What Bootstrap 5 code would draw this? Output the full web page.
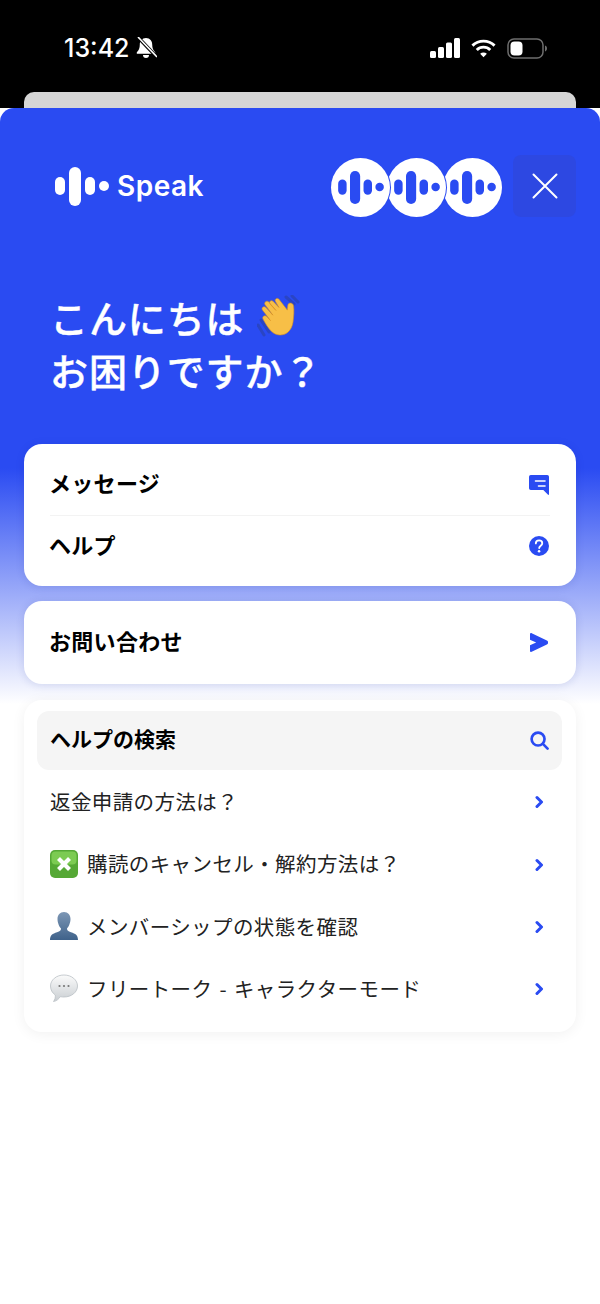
<!DOCTYPE html>
<html lang="ja">

<head>
    <meta charset="UTF-8">
    <meta name="viewport" content="width=device-width, initial-scale=1.0">
    <link href="https://cdn.jsdelivr.net/npm/bootstrap@5.3.0/dist/css/bootstrap.min.css" rel="stylesheet">
    <script src="https://cdn.jsdelivr.net/npm/bootstrap@5.3.0/dist/js/bootstrap.bundle.min.js"></script>
    <style>
        html, body { margin: 0; background: #fff; }
        body { width: 600px; height: 1304px; overflow: hidden; font-family: "Liberation Sans", "Noto Sans CJK JP", sans-serif; }
        .status-area { background: #000; height: 108px; color: #fff; }
        .status-bar { height: 92px; padding: 4px 53px 0 64px; }
        .status-time { font-family: Inter, sans-serif; font-size: 25px; font-weight: 500; line-height: 1; margin-right: 6px; }
        .status-right { gap: 11px; }
        .back-tab { height: 16px; margin: 0 24px; background: #d6d6d6; border-radius: 10px 10px 0 0; }
        .sheet { padding-top: 47px; border-radius: 14px 14px 0 0; height: 1196px;
            background: linear-gradient(#2a4bf2 0, #2a4bf2 360px, #fff 596px); }
        .sheet-head { padding: 0 24px 0 55px; height: 62px; }
        .brand-name { font-family: Inter, sans-serif; font-weight: 600; font-size: 28px; letter-spacing: .5px; line-height: 1; color: #fff; margin-left: 8px; }
        .face { width: 59px; height: 59px; border-radius: 50%; background: #fff; box-shadow: 0 0 0 1px #2a4bf2; margin-left: -3px; position: relative; }
        .face:nth-child(1) { z-index: 3; }
        .face:nth-child(2) { z-index: 2; }
        .face-row { margin: 3px 11px 0 0; }
        .close-box { width: 63px; height: 62px; border-radius: 8px; background: #2d48e2; border: 0; padding: 0; }
        .hello { margin: 73px 0 48px; padding-left: 50px; color: #fff; font-family: "Noto Sans CJK JP", sans-serif; font-size: 38px; font-weight: 500; -webkit-text-stroke: .4px #fff; letter-spacing: .9px; line-height: 53px; }
        .hello svg { vertical-align: -8px; margin-left: 3px; }
        .panel { margin: 0 24px; background: #fff; border: 0; border-radius: 18px; box-shadow: 0 1px 8px rgba(20, 40, 140, .14); }
        .panel-a { padding: 10px 26px; }
        .panel-b { margin-top: 15px; height: 83px; padding: 0 26px; }
        .panel-c { margin-top: 16px; padding: 11px 14px 12px 13px; box-shadow: 0 2px 14px rgba(0, 0, 0, .06); }
        .link-row { height: 61px; font-family: "Noto Sans CJK JP", sans-serif; font-size: 22px; font-weight: 700; color: #000; letter-spacing: .3px; }
        .link-row + .link-row { border-top: 1px solid #f3f3f3; }
        .link-text { margin: -4px 0 0 -1px; }
        .search-row { height: 59px; padding: 0 12px 0 13px; border-radius: 12px; background: #f5f5f5; font-family: "Noto Sans CJK JP", sans-serif; font-size: 21px; font-weight: 700; color: #000; }
        .search-row > span:first-child { margin-top: -4px; }
        .faq-row { height: 62.4px; padding: 0 12px 0 13px; font-family: "Noto Sans CJK JP", sans-serif; font-size: 20.5px; letter-spacing: .4px; word-spacing: 2px; color: #222; }
        .faq-row .icon-slot { padding-top: 2px; }
        .faq-emoji { width: 28px; height: 28px; margin-right: 9px; flex: none; }
        .icon-slot { width: 22px; flex: none; display: flex; justify-content: center; }
    </style>
    <title>Speak</title>
</head>

<body>
    <div class="status-area">
        <div class="status-bar d-flex align-items-center">
            <span class="status-time">13:42</span>
            <svg width="22" height="22" viewBox="0 0 22 22" fill="#fff">
                <path d="M11 1C7 1 4.800 4 4.800 7.600c0 3.700-1 5.800-3 7.600v1.600h18.400v-1.600c-2-1.800-3-3.900-3-7.600C17.200 4 15 1 11 1zM8 18a3 3 0 0 0 6 0z"/>
                <path d="M3.300 .5 21.300 19.500" stroke="#000" stroke-width="3.400"/>
                <path d="M3 0 22 20" stroke="#fff" stroke-width="1.600"/>
            </svg>
            <div class="ms-auto d-flex align-items-center status-right">
                <svg width="30" height="22" viewBox="0 0 30 22" fill="#fff">
                    <rect x="0" y="14" width="6" height="7" rx="1.500"/>
                    <rect x="8" y="10" width="6" height="11" rx="1.500"/>
                    <rect x="16" y="5.500" width="6" height="15.500" rx="1.500"/>
                    <rect x="24" y="1" width="6" height="20" rx="1.500"/>
                </svg>
                <svg width="25" height="22" viewBox="0 0 26 22" fill="none" stroke="#fff" stroke-width="3">
                    <path d="M1.500 8.500a16.500 16.500 0 0 1 23 0"/>
                    <path d="M6 13a10 10 0 0 1 14 0"/>
                    <path d="M13 20.500 9.500 17a5 5 0 0 1 7 0z" fill="#fff" stroke="none"/>
                </svg>
                <svg width="40" height="22" viewBox="0 0 40 22" fill="none">
                    <rect x="1" y="2" width="35" height="19" rx="6" stroke="#6e6e6e" stroke-width="1.500"/>
                    <rect x="3.500" y="4.500" width="12" height="14" rx="4" fill="#fff"/>
                    <path d="M38 8.500c1.300.4 2 1.600 2 3s-.7 2.600-2 3z" fill="#6e6e6e"/>
                </svg>
            </div>
        </div>
        <div class="back-tab"></div>
    </div>

    <div class="sheet">
        <div class="sheet-head d-flex align-items-center">
            <svg width="54" height="39" viewBox="0 0 54 39" fill="#fff">
                <rect x="0" y="10" width="10" height="18" rx="5"/>
                <rect x="14" y="0" width="12" height="39" rx="6"/>
                <rect x="30" y="10" width="10" height="18" rx="5"/>
                <circle cx="49" cy="19" r="5"/>
            </svg>
            <span class="brand-name">Speak</span>
            <div class="ms-auto d-flex face-row">
                <div class="face d-flex align-items-center justify-content-center">
                    <svg width="46" height="33" viewBox="0 0 54 39" fill="#2a4bf2"><rect x="0" y="10" width="10" height="18" rx="5"/><rect x="14" y="0" width="12" height="39" rx="6"/><rect x="30" y="10" width="10" height="18" rx="5"/><circle cx="49" cy="19" r="5"/></svg>
                </div>
                <div class="face d-flex align-items-center justify-content-center">
                    <svg width="46" height="33" viewBox="0 0 54 39" fill="#2a4bf2"><rect x="0" y="10" width="10" height="18" rx="5"/><rect x="14" y="0" width="12" height="39" rx="6"/><rect x="30" y="10" width="10" height="18" rx="5"/><circle cx="49" cy="19" r="5"/></svg>
                </div>
                <div class="face d-flex align-items-center justify-content-center">
                    <svg width="46" height="33" viewBox="0 0 54 39" fill="#2a4bf2"><rect x="0" y="10" width="10" height="18" rx="5"/><rect x="14" y="0" width="12" height="39" rx="6"/><rect x="30" y="10" width="10" height="18" rx="5"/><circle cx="49" cy="19" r="5"/></svg>
                </div>
            </div>
            <button type="button" class="close-box d-flex align-items-center justify-content-center" aria-label="閉じる">
                <svg width="26" height="26" viewBox="0 0 26 26" stroke="#fff" stroke-width="2" stroke-linecap="round"><path d="M1.500 1.500 24.500 24.500M24.500 1.500 1.500 24.500"/></svg>
            </button>
        </div>

        <div class="hello">
            こんにちは
            <svg width="46" height="46" viewBox="0 0 46 46">
                <g stroke="#2a45c4" stroke-width="3" fill="none" stroke-linecap="round">
                    <path d="M4 25 12 37"/><path d="M1 30 7 40"/>
                    <path d="M29 2 37 9"/><path d="M35 1 41 7"/>
                </g>
                <path d="M13 9c-1.500-2 1-4.500 3-2.800l6 6.300-3.500-6c-1.300-2.300 1.500-4.200 3.300-2.400l8.500 11 .5-4.600c.3-3.200 5-3.300 5.700.2.800 4.500.2 11-.5 16.500-1.300 9-8 14-15 12.600-6-1.200-10-6.500-15-15.800-1.300-2.500 2-4.300 3.800-2.400l3.700 4-8-10.500c-1.600-2.300 1.500-4.500 3.400-2.700l7 7.800-8-10.800C6.800 7.300 9.800 5 11.800 7l7.200 8.500z" fill="#f7bf47" stroke="#d98f1f" stroke-width=".6"/>
            </svg>
            <br>お困りですか？
        </div>

        <div class="card panel panel-a">
            <div class="link-row d-flex align-items-center justify-content-between">
                <span class="link-text">メッセージ</span>
                <span class="icon-slot">
                    <svg width="20" height="20" viewBox="0 0 20 20" fill="#2a4bf2">
                        <path d="M1.800 0h16.400A1.800 1.800 0 0 1 20 1.800V19.500l-.7.500-5-5H1.800A1.800 1.800 0 0 1 0 13.200V1.800A1.800 1.800 0 0 1 1.800 0z"/>
                        <path d="M6.500 6h9.500M9.500 11h6.500" stroke="#fff" stroke-width="1.600" stroke-linecap="round"/>
                    </svg>
                </span>
            </div>
            <div class="link-row d-flex align-items-center justify-content-between">
                <span class="link-text">ヘルプ</span>
                <span class="icon-slot">
                    <svg width="20" height="20" viewBox="0 0 22 22">
                        <circle cx="11" cy="11" r="11" fill="#2a4bf2"/>
                        <path d="M7.500 8.200c0-2 1.600-3.300 3.600-3.300s3.500 1.200 3.500 3c0 2.700-3.400 2.800-3.400 5.400" fill="none" stroke="#fff" stroke-width="2" stroke-linecap="round"/>
                        <circle cx="11.100" cy="16.800" r="1.400" fill="#fff"/>
                    </svg>
                </span>
            </div>
        </div>

        <div class="card panel panel-b flex-row align-items-center justify-content-between">
            <span class="link-row d-flex align-items-center"><span class="link-text">お問い合わせ</span></span>
            <span class="icon-slot">
                <svg width="18" height="19" viewBox="0 0 19 20" fill="#2a4bf2">
                    <path d="M1.800.200 17.800 8a2.200 2.200 0 0 1 0 4L1.800 19.800C.9 20.200 0 19.600 0 18.600V12.800L6.500 10 0 7.200V1.400C0 .4.900-.2 1.800.200z"/>
                </svg>
            </span>
        </div>

        <div class="card panel panel-c">
            <div class="search-row d-flex align-items-center justify-content-between">
                <span>ヘルプの検索</span>
                <span class="icon-slot">
                    <svg width="19" height="19" viewBox="0 0 20 20" fill="none" stroke="#2a4bf2" stroke-width="2.800" stroke-linecap="round">
                        <circle cx="8.500" cy="8.500" r="6.800"/><path d="M13.600 13.600 18.500 18.500"/>
                    </svg>
                </span>
            </div>
            <div class="faq-row d-flex align-items-center justify-content-between">
                <span>返金申請の方法は？</span>
                <span class="icon-slot"><svg width="9" height="14" viewBox="0 0 9 14" fill="none" stroke="#2a4bf2" stroke-width="3" stroke-linecap="round" stroke-linejoin="round"><path d="M2 2.500 6.500 7 2 11.500"/></svg></span>
            </div>
            <div class="faq-row d-flex align-items-center">
                <svg class="faq-emoji" viewBox="0 0 28 28">
                    <rect x="0" y="0" width="28" height="28" rx="5" fill="#55a835"/>
                    <rect x="1.500" y="1.500" width="25" height="13" rx="4" fill="#7ccb52"/>
                    <path d="M8.500 8.500 19.500 19.500M19.500 8.500 8.500 19.500" stroke="#fff" stroke-width="4.200"/>
                </svg>
                <span>購読のキャンセル・解約方法は？</span>
                <span class="icon-slot ms-auto"><svg width="9" height="14" viewBox="0 0 9 14" fill="none" stroke="#2a4bf2" stroke-width="3" stroke-linecap="round" stroke-linejoin="round"><path d="M2 2.500 6.500 7 2 11.500"/></svg></span>
            </div>
            <div class="faq-row d-flex align-items-center">
                <svg class="faq-emoji" viewBox="0 0 28 28">
                    <defs><linearGradient id="bustFill" x1="0" y1="0" x2="0" y2="1"><stop offset="0" stop-color="#7d97b5"/><stop offset="1" stop-color="#3f628a"/></linearGradient></defs>
                    <path d="M14 0c4 0 6.500 3 6.500 7s-2 8-3.500 9.500c0 2 1 2.800 4 3.700 4.500 1.400 7 3 7 7.800H0c0-4.800 2.500-6.400 7-7.800 3-.9 4-1.700 4-3.700C9.500 15 7.500 11 7.500 7S10 0 14 0z" fill="url(#bustFill)"/>
                </svg>
                <span>メンバーシップの状態を確認</span>
                <span class="icon-slot ms-auto"><svg width="9" height="14" viewBox="0 0 9 14" fill="none" stroke="#2a4bf2" stroke-width="3" stroke-linecap="round" stroke-linejoin="round"><path d="M2 2.500 6.500 7 2 11.500"/></svg></span>
            </div>
            <div class="faq-row d-flex align-items-center">
                <svg class="faq-emoji" viewBox="0 0 28 28">
                    <defs><linearGradient id="bubbleFill" x1="0" y1="0" x2="0" y2="1"><stop offset="0" stop-color="#fbfbfb"/><stop offset="1" stop-color="#c9ced2"/></linearGradient></defs>
                    <path d="M14 1c7.700 0 13.500 5 13.500 11S21.700 23 14 23c-1.300 0-2.500-.1-3.700-.4C9 24.800 6.800 27 3.500 27.500c1.500-2 2-4 1.800-6.500C2.300 19 .5 15.800.5 12 .5 6 6.300 1 14 1z" fill="url(#bubbleFill)" stroke="#b9bfc4" stroke-width=".8"/>
                    <circle cx="9.500" cy="12" r="1.100" fill="#777"/><circle cx="14" cy="12" r="1.100" fill="#777"/><circle cx="18.500" cy="12" r="1.100" fill="#777"/>
                </svg>
                <span>フリートーク - キャラクターモード</span>
                <span class="icon-slot ms-auto"><svg width="9" height="14" viewBox="0 0 9 14" fill="none" stroke="#2a4bf2" stroke-width="3" stroke-linecap="round" stroke-linejoin="round"><path d="M2 2.500 6.500 7 2 11.500"/></svg></span>
            </div>
        </div>
    </div>
</body>

</html>
